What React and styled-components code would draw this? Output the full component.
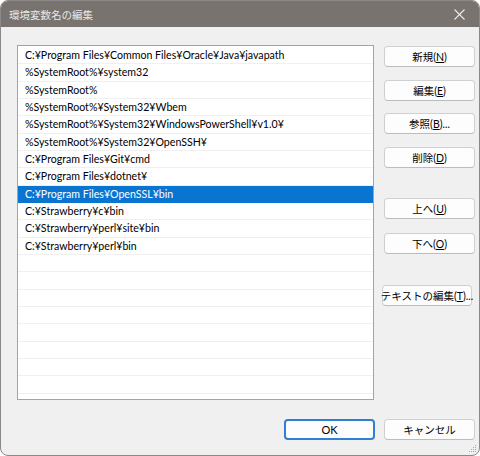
import React from 'react'
import styled, { createGlobalStyle } from 'styled-components'

const GlobalStyle = createGlobalStyle`
  html, body {
    margin: 0;
    padding: 0;
    background: #ffffff;
  }
  body {
    font-family: "Lato", "Noto Sans CJK JP", sans-serif;
    font-size: 11px;
  }
`

const paths = [
  'C:¥Program Files¥Common Files¥Oracle¥Java¥javapath',
  '%SystemRoot%¥system32',
  '%SystemRoot%',
  '%SystemRoot%¥System32¥Wbem',
  '%SystemRoot%¥System32¥WindowsPowerShell¥v1.0¥',
  '%SystemRoot%¥System32¥OpenSSH¥',
  'C:¥Program Files¥Git¥cmd',
  'C:¥Program Files¥dotnet¥',
  'C:¥Program Files¥OpenSSL¥bin',
  'C:¥Strawberry¥c¥bin',
  'C:¥Strawberry¥perl¥site¥bin',
  'C:¥Strawberry¥perl¥bin',
]

const selectedIndex = 8
const rowCount = 21

const Window = styled.div`
  width: 480px;
  height: 456px;
  box-sizing: border-box;
  display: flex;
  flex-direction: column;
  background: #f0f0f0;
  border: 1px solid #8c8887;
  border-radius: 8px;
  overflow: hidden;
  position: relative;
`

const TitleBar = styled.div`
  height: 26px;
  flex: none;
  display: flex;
  align-items: center;
  justify-content: space-between;
  background: #78736f;
  padding: 0 8px 0 8px;
`

const Title = styled.div`
  color: #e8e6e5;
  font-family: "Noto Sans CJK JP", sans-serif;
  font-size: 10.5px;
`

const CloseButton = styled.div`
  width: 20px;
  height: 20px;
  display: flex;
  align-items: center;
  justify-content: center;
  margin-right: 2px;
`

const Body = styled.div`
  flex: 1;
  display: flex;
  flex-direction: column;
  padding: 18px 4px 0 16px;
`

const Main = styled.div`
  display: flex;
  gap: 10px;
`

const ListBox = styled.div`
  width: 357px;
  height: 355px;
  box-sizing: border-box;
  border: 1px solid #a3a3a3;
  background: #ffffff;
  padding-top: 1px;
  overflow: hidden;
`

const Row = styled.div`
  height: 17.33px;
  box-sizing: border-box;
  padding-left: 7px;
  display: flex;
  align-items: center;
  white-space: nowrap;
  color: ${p => (p.$selected ? '#ffffff' : '#000000')};
  background: ${p => (p.$selected ? '#0a74d1' : '#ffffff')};
  border-bottom: 1px solid ${p => (p.$selected ? '#0a74d1' : '#f0f0f0')};
  font-size: 10.6px;
  line-height: 16px;
`

const Buttons = styled.div`
  display: flex;
  flex-direction: column;
  width: 91px;
`

const Button = styled.div`
  height: 21px;
  width: ${p => p.$width || 91}px;
  margin-top: ${p => p.$space || 0}px;
  margin-left: ${p => p.$shift || 0}px;
  box-sizing: border-box;
  border: 1px solid #d0d0d0;
  border-bottom-color: #bcbcbc;
  border-radius: 4px;
  background: #fdfdfd;
  display: flex;
  align-items: center;
  justify-content: center;
  font-family: "Lato", "Noto Sans CJK JP", sans-serif;
  font-size: 10.5px;
  color: #000000;
  white-space: nowrap;
  u {
    text-underline-offset: 1px;
  }
`

const DefaultButton = styled(Button)`
  border: 2px solid #2f7fd2;
  border-radius: 4px;
  font-size: 11px;
`

const Footer = styled.div`
  display: flex;
  justify-content: flex-end;
  gap: 9px;
  margin-top: 19px;
`

const Grip = styled.svg`
  position: absolute;
  right: 2px;
  bottom: 2px;
`

export default function App() {
  return (
    <>
      <GlobalStyle />
      <Window>
        <TitleBar>
          <Title>環境変数名の編集</Title>
          <CloseButton>
            <svg width="11" height="11" viewBox="0 0 11 11">
              <path d="M0.5 0.5 L10.5 10.5 M10.5 0.5 L0.5 10.5" stroke="#eceaea" strokeWidth="1.1" />
            </svg>
          </CloseButton>
        </TitleBar>
        <Body>
          <Main>
            <ListBox>
              {Array.from({ length: rowCount }).map((_, i) => (
                <Row key={i} $selected={i === selectedIndex}>
                  {paths[i] || ''}
                </Row>
              ))}
            </ListBox>
            <Buttons>
              <Button $space={1}>新規(<u>N</u>)</Button>
              <Button $space={13}>編集(<u>E</u>)</Button>
              <Button $space={12}>参照(<u>B</u>)...</Button>
              <Button $space={13}>削除(<u>D</u>)</Button>
              <Button $space={30}>上へ(<u>U</u>)</Button>
              <Button $space={14}>下へ(<u>O</u>)</Button>
              <Button $space={31} $width={90} $shift={-2}>テキストの編集(<u>T</u>)...</Button>
            </Buttons>
          </Main>
          <Footer>
            <DefaultButton>OK</DefaultButton>
            <Button>キャンセル</Button>
          </Footer>
        </Body>
        <Grip width="10" height="10" viewBox="0 0 10 10">
          <g fill="#a8a8a8">
            <rect x="8" y="2" width="1" height="1" />
            <rect x="6" y="4" width="1" height="1" />
            <rect x="8" y="4" width="1" height="1" />
            <rect x="4" y="6" width="1" height="1" />
            <rect x="6" y="6" width="1" height="1" />
            <rect x="8" y="6" width="1" height="1" />
            <rect x="2" y="8" width="1" height="1" />
            <rect x="4" y="8" width="1" height="1" />
            <rect x="6" y="8" width="1" height="1" />
            <rect x="8" y="8" width="1" height="1" />
          </g>
        </Grip>
      </Window>
    </>
  )
}
